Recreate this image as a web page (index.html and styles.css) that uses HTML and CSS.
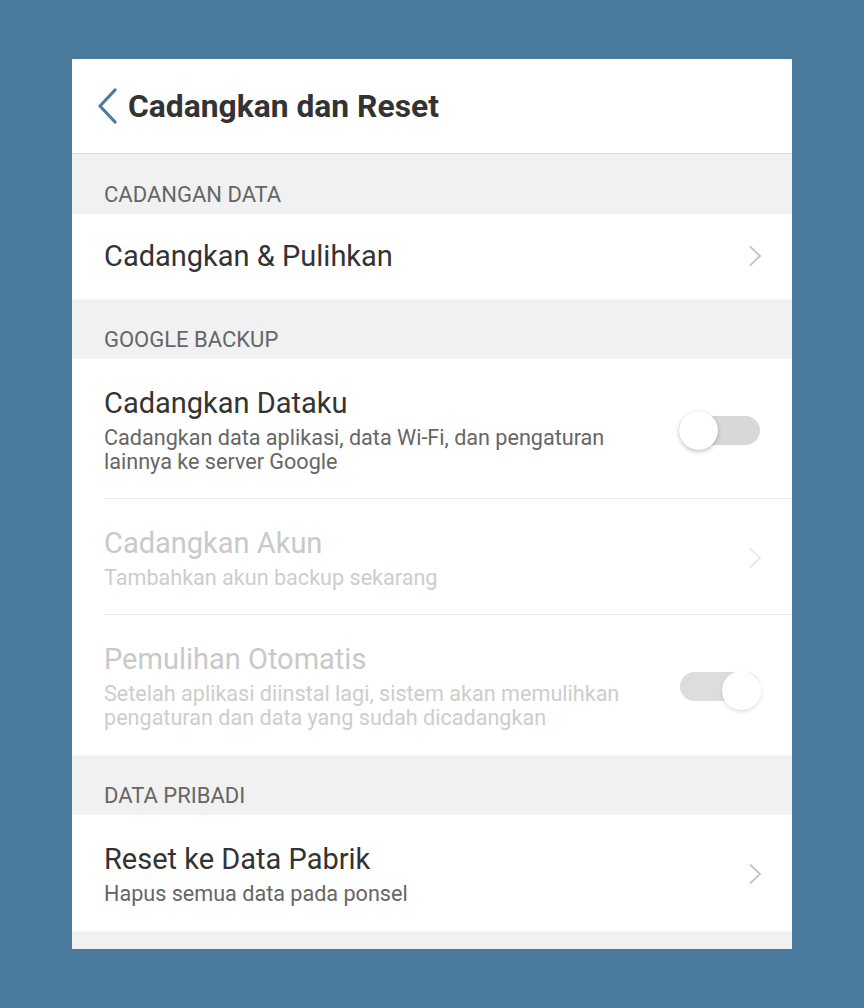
FILE: index.html
```html
<!DOCTYPE html>
<html lang="id">
<head>
<meta charset="utf-8">
<title>Cadangkan dan Reset</title>
<link rel="stylesheet" href="styles.css">
</head>
<body>
<div class="panel">
  <header class="topbar">
    <svg class="back" width="22" height="36" viewBox="0 0 22 36"><path d="M19 2 L4 18 L19 34" fill="none" stroke="#4b7ba0" stroke-width="3.2" stroke-linecap="round" stroke-linejoin="round"/></svg>
    <h1 class="title">Cadangkan dan Reset</h1>
  </header>

  <div class="section">CADANGAN DATA</div>
  <div class="row single">
    <div class="text"><div class="row-title">Cadangkan &amp; Pulihkan</div></div>
    <svg class="chev" width="14" height="22" viewBox="0 0 14 22"><path d="M2 1.5 L12 11 L2 20.5" fill="none" stroke="#c4c4c4" stroke-width="1.8"/></svg>
  </div>

  <div class="section">GOOGLE BACKUP</div>
  <div class="row divided">
    <div class="text">
      <div class="row-title">Cadangkan Dataku</div>
      <div class="row-sub">Cadangkan data aplikasi, data Wi-Fi, dan pengaturan lainnya ke server Google</div>
    </div>
    <div class="switch off"><span class="knob"></span></div>
  </div>
  <div class="row divided disabled">
    <div class="text">
      <div class="row-title">Cadangkan Akun</div>
      <div class="row-sub">Tambahkan akun backup sekarang</div>
    </div>
    <svg class="chev" width="14" height="22" viewBox="0 0 14 22"><path d="M2 1.5 L12 11 L2 20.5" fill="none" stroke="#e8e8e8" stroke-width="1.8"/></svg>
  </div>
  <div class="row disabled">
    <div class="text">
      <div class="row-title">Pemulihan Otomatis</div>
      <div class="row-sub">Setelah aplikasi diinstal lagi, sistem akan memulihkan pengaturan dan data yang sudah dicadangkan</div>
    </div>
    <div class="switch on"><span class="knob"></span></div>
  </div>

  <div class="section">DATA PRIBADI</div>
  <div class="row">
    <div class="text">
      <div class="row-title">Reset ke Data Pabrik</div>
      <div class="row-sub">Hapus semua data pada ponsel</div>
    </div>
    <svg class="chev" width="14" height="22" viewBox="0 0 14 22"><path d="M2 1.5 L12 11 L2 20.5" fill="none" stroke="#c4c4c4" stroke-width="1.8"/></svg>
  </div>
  <div class="footer-band"></div>
</div>
</body>
</html>
```
FILE: styles.css
```css
* { box-sizing: border-box; }
html, body {
  margin: 0;
  padding: 0;
  background: #4a7b9c;
  font-family: Roboto, "Liberation Sans", sans-serif;
}
body { padding-top: 59px; height: 1008px; overflow: hidden; }
.panel {
  width: 720px;
  margin: 0 auto;
  background: #ffffff;
}
.topbar {
  height: 95px;
  display: flex;
  align-items: center;
  padding-left: 24px;
  border-bottom: 1px solid #dcdcdc;
}
.back { display: block; margin-right: 10px; }
.title {
  margin: 0;
  font-size: 31.8px;
  font-weight: 700;
  color: #333333;
}
.section {
  height: 60px;
  background: #f1f1f1;
  padding: 29px 32px 0;
  font-size: 22px;
  line-height: 24px;
  color: #666666;
}
.row {
  display: flex;
  align-items: center;
  padding: 27px 32px 25px;
  position: relative;
}
.row.single { padding: 25px 32px 26px; }
.row.divided::after {
  content: "";
  position: absolute;
  left: 32px;
  right: 0;
  bottom: 0;
  height: 1px;
  background: #ececec;
}
.text { flex: 1; padding-right: 40px; }
.row-title {
  font-size: 29px;
  line-height: 34px;
  color: #333333;
}
.row-sub {
  margin-top: 6px;
  font-size: 21.6px;
  line-height: 24px;
  color: #666666;
}
.disabled .row-title { color: #c9c9c9; }
.disabled .row-sub { color: #cdcdcd; }
.chev { display: block; flex: none; margin-right: -2px; }
.switch {
  flex: none;
  position: relative;
  width: 80px;
  height: 29px;
  border-radius: 15px;
  background: #d6d9d7;
}
.switch .knob {
  position: absolute;
  top: -5px;
  width: 39px;
  height: 39px;
  border-radius: 50%;
  background: #ffffff;
  box-shadow: 0 2px 4px rgba(0,0,0,0.22), 0 0 1px rgba(0,0,0,0.15);
}
.switch.off .knob { left: -1px; }
.switch.on .knob { right: -1px; top: -1px; }
.disabled .switch { background: #dbdedc; }
.disabled .switch .knob { box-shadow: 0 2px 4px rgba(0,0,0,0.12); }
.footer-band { height: 18px; background: #f1f1f1; }
```
